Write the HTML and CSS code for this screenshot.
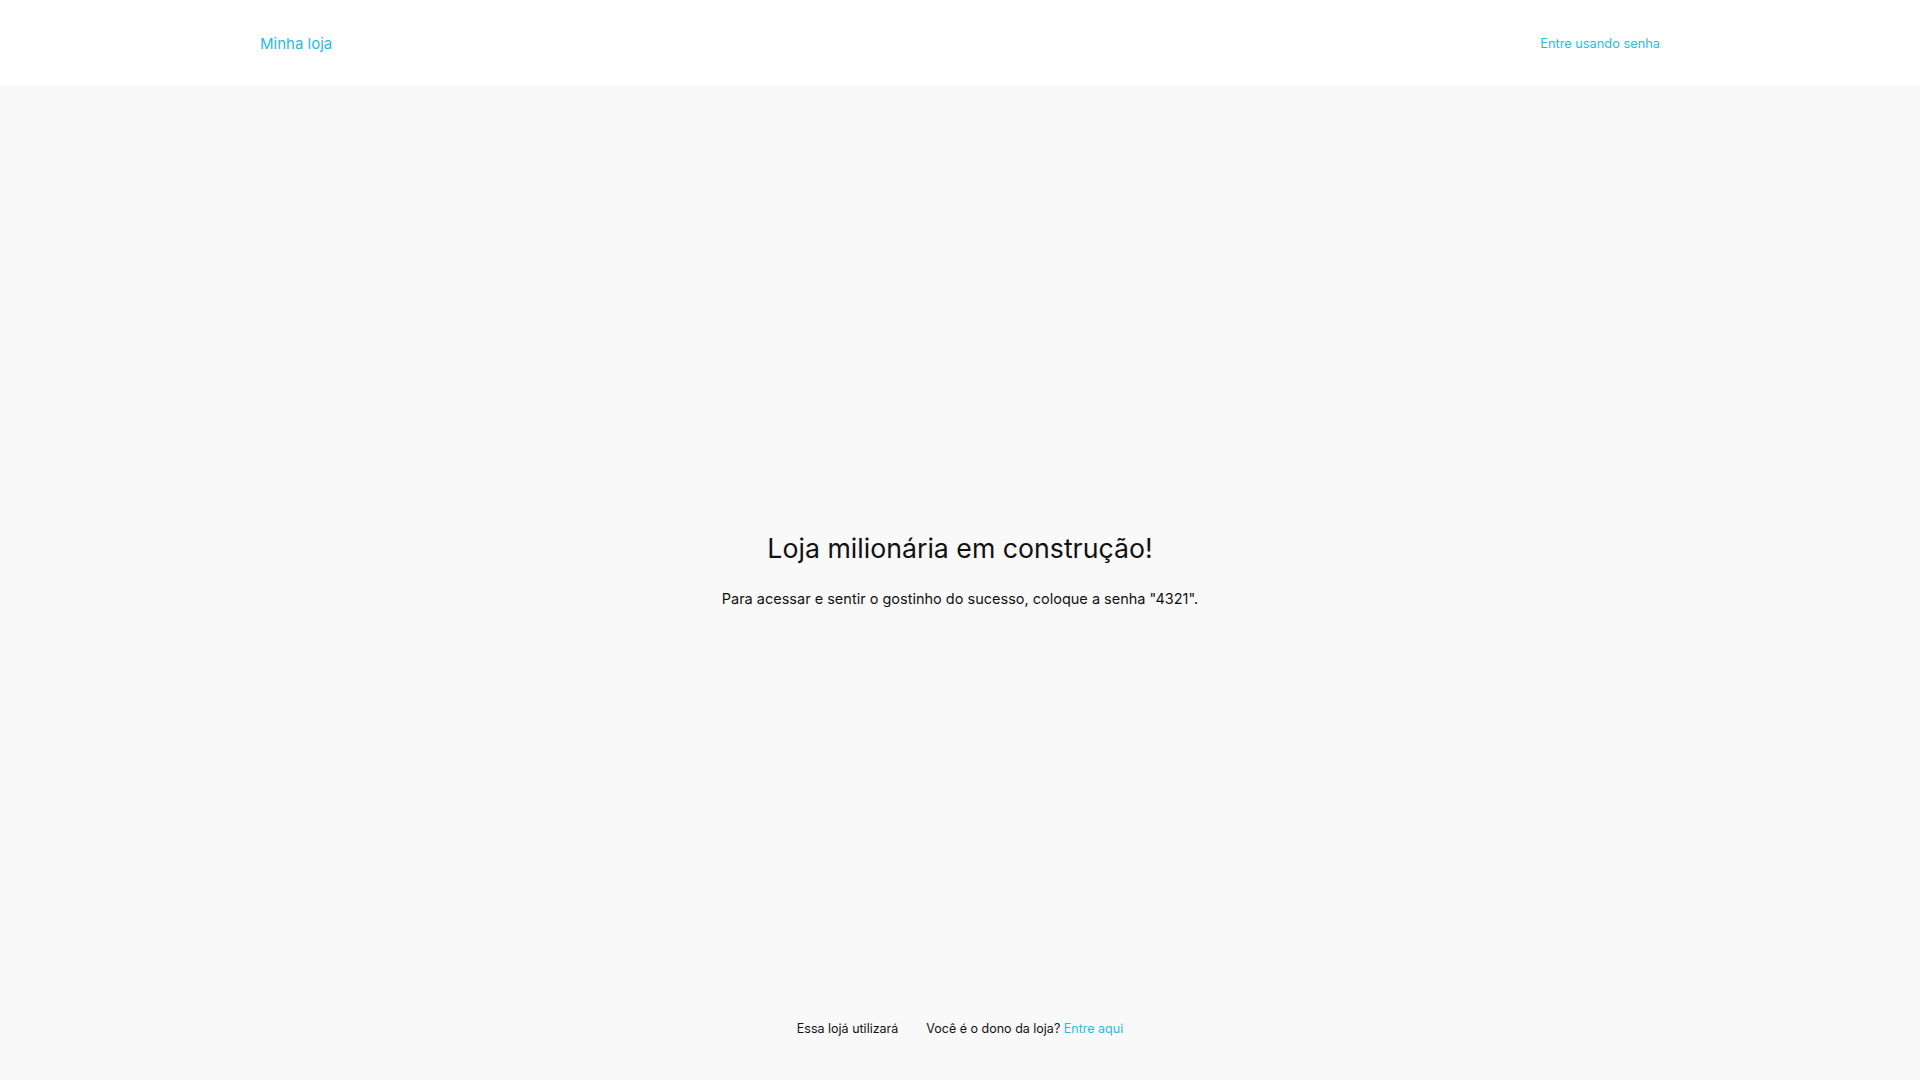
FILE: index.html
```html
<!DOCTYPE html>
<html lang="pt-BR">
<head>
<meta charset="utf-8">
<title>Minha loja</title>
<link rel="stylesheet" href="styles.css">
</head>
<body>
<div class="page">
  <header class="header">
    <a class="brand" href="#">Minha loja</a>
    <a class="login" href="#">Entre usando senha</a>
  </header>
  <main class="main">
    <div class="message">
      <h1 class="title">Loja milionária em construção!</h1>
      <p class="subtitle">Para acessar e sentir o gostinho do sucesso, coloque a senha "4321".</p>
    </div>
  </main>
  <footer class="footer">
    <span class="powered">Essa lojá utilizará</span>
    <span class="owner">Você é o dono da loja? <a class="owner-link" href="#">Entre aqui</a></span>
  </footer>
</div>
</body>
</html>
```

FILE: styles.css
```css
html, body {
  margin: 0;
  padding: 0;
}
body {
  font-family: Inter, "Open Sans", "Liberation Sans", sans-serif;
  color: #111111;
  background: #f9f9f9;
}
a {
  text-decoration: none;
}
.page {
  display: flex;
  flex-direction: column;
  min-height: 100vh;
}
.header {
  height: 86px;
  background: #ffffff;
  display: flex;
  align-items: center;
  justify-content: space-between;
  padding: 0 260px;
  box-sizing: border-box;
}
.brand {
  color: #1fbbec;
  font-size: 15px;
}
.login {
  color: #1fbbec;
  font-size: 12.8px;
}
.main {
  flex: 1;
  display: flex;
  align-items: center;
  justify-content: center;
  padding-top: 54px;
}
.message {
  text-align: center;
}
.title {
  margin: 0;
  font-size: 26.7px;
  font-weight: 400;
  line-height: 34px;
}
.subtitle {
  margin: 24px 0 0;
  font-size: 14.5px;
  line-height: 20px;
}
.footer {
  height: 80px;
  display: flex;
  justify-content: center;
  align-items: flex-start;
  gap: 28px;
  font-size: 12.5px;
  padding-top: 21px;
  box-sizing: border-box;
}
.owner-link {
  color: #1fbbec;
}
```
